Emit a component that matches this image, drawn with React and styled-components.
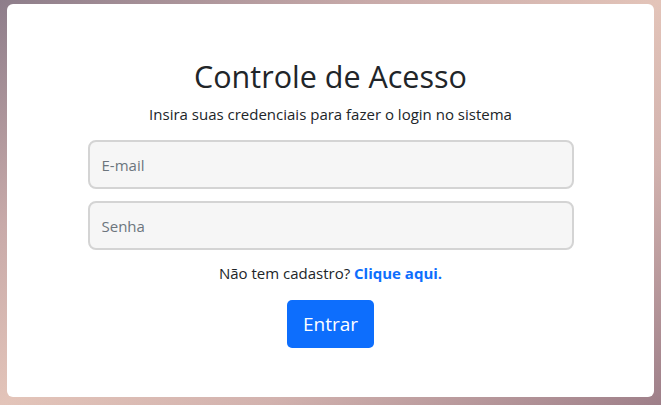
import React, { useState } from 'react'
import styled, { createGlobalStyle } from 'styled-components'

const GlobalStyle = createGlobalStyle`
  * { box-sizing: border-box; }
  html, body { margin: 0; padding: 0; }
  body {
    font-family: "Open Sans", "Noto Sans", "Liberation Sans", sans-serif;
    color: #212529;
  }
`

const Page = styled.div`
  width: 661px;
  height: 405px;
  padding: 4px 7px 8px 7px;
  background: linear-gradient(to bottom right, #8d7d8a 0%, #c8aaa9 28%, #e3c4b9 50%, #d2b2ae 70%, #9e7f89 100%);
`

const Card = styled.div`
  height: 100%;
  background: #fff;
  border-radius: 6px;
  padding-top: 53px;
  display: flex;
  flex-direction: column;
  align-items: center;
`

const Title = styled.h1`
  margin: 0 0 7px;
  font-size: 30.5px;
  font-weight: 400;
  line-height: 38px;
`

const Subtitle = styled.p`
  margin: 0 0 14px;
  font-size: 15px;
  line-height: 24px;
`

const Form = styled.form`
  width: 486px;
  display: flex;
  flex-direction: column;
  align-items: center;
`

const Field = styled.input`
  width: 100%;
  height: 49px;
  margin-bottom: 12px;
  padding: 0 12px;
  border: 2px solid #d4d4d4;
  border-radius: 8px;
  background: #f6f6f6;
  font-family: inherit;
  font-size: 15px;
  color: #212529;
  outline: none;
  &::placeholder { color: #6c757d; }
`

const Signup = styled.p`
  margin: -1px 0 15px;
  font-size: 15px;
  line-height: 24px;
`

const Link = styled.a`
  color: #0d6efd;
  font-weight: 700;
  text-decoration: none;
`

const Button = styled.button`
  height: 48px;
  padding: 0 16px;
  border: none;
  border-radius: 5px;
  background: #0d6efd;
  color: #fff;
  font-family: inherit;
  font-size: 19px;
  cursor: pointer;
`

export default function App() {
  const [email, setEmail] = useState('')
  const [senha, setSenha] = useState('')

  return (
    <>
      <GlobalStyle />
      <Page>
        <Card>
          <Title>Controle de Acesso</Title>
          <Subtitle>Insira suas credenciais para fazer o login no sistema</Subtitle>
          <Form onSubmit={(e) => e.preventDefault()}>
            <Field type="email" placeholder="E-mail" value={email} onChange={(e) => setEmail(e.target.value)} />
            <Field type="password" placeholder="Senha" value={senha} onChange={(e) => setSenha(e.target.value)} />
            <Signup>Não tem cadastro? <Link href="#">Clique aqui.</Link></Signup>
            <Button type="submit">Entrar</Button>
          </Form>
        </Card>
      </Page>
    </>
  )
}
